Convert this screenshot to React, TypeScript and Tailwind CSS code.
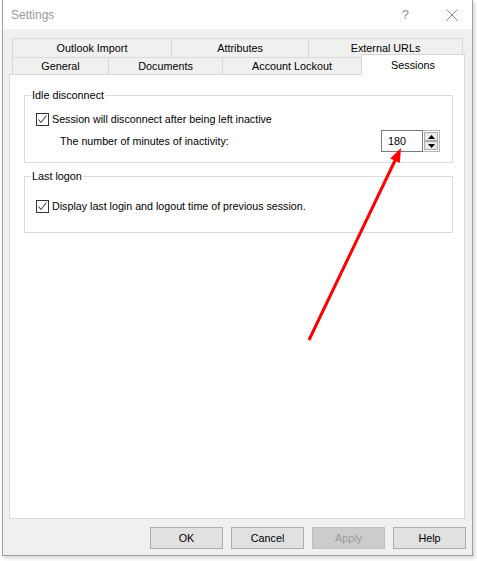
import React from "react";

const font = { fontFamily: '"Liberation Sans", Arial, sans-serif' };

function CheckBox() {
  return (
    <div className="w-[13px] h-[13px] border border-[#333333] bg-white flex items-center justify-center shrink-0">
      <svg width="11" height="11" viewBox="0 0 11 11">
        <path d="M1.5 5.5 L4 8.5 L9.5 1.5" fill="none" stroke="#444444" strokeWidth="1.1" />
      </svg>
    </div>
  );
}

function Tab({ label, w, last }: { label: string; w: string; last?: boolean }) {
  return (
    <div
      className={`${w} h-full border-t border-l border-[#d9d9d9] bg-[#f0f0f0] flex items-center justify-center text-[10.8px] text-black ${last ? "border-r" : ""}`}
    >
      {label}
    </div>
  );
}

export default function App() {
  return (
    <div className="relative w-[477px] h-[561px] bg-white overflow-hidden" style={font}>
      <div className="ml-[2px] w-[471px] h-[556px] border-l border-r border-b border-[#a0a0a0] bg-[#f0f0f0] flex flex-col shadow-[2px_2px_4px_rgba(0,0,0,0.18)]">
        {/* title bar */}
        <div className="h-[29px] bg-white flex items-center pl-[8px] pr-[14px] shrink-0">
          <span className="text-[12px] text-[#9a9a9a] leading-none">Settings</span>
          <div className="flex-1" />
          <span className="text-[13px] text-[#8c8c8c] leading-none mr-[37px]">?</span>
          <svg width="12" height="12" viewBox="0 0 12 12">
            <path d="M0.5 0.5 L11.5 11.5 M11.5 0.5 L0.5 11.5" stroke="#8a8a8a" strokeWidth="1" fill="none" />
          </svg>
        </div>

        {/* tabs row 1 */}
        <div className="mt-[9px] ml-[9px] h-[19px] flex">
          <Tab label="Outlook Import" w="w-[159px]" />
          <Tab label="Attributes" w="w-[137px]" />
          <Tab label="External URLs" w="w-[155px]" last />
        </div>
        {/* tabs row 2 */}
        <div className="-mt-[3px] ml-[9px] h-[21px] flex items-end relative z-10">
          <div className="h-[17px] mb-[1px] flex">
            <Tab label="General" w="w-[96px]" />
            <Tab label="Documents" w="w-[114px]" />
            <Tab label="Account Lockout" w="w-[139px]" />
          </div>
          <div className="w-[104px] h-[21px] border-t border-l border-r border-[#d9d9d9] bg-white flex justify-center pt-[2px] text-[10.8px] text-black">
            Sessions
          </div>
        </div>

        {/* panel */}
        <div className="-mt-[1px] ml-[6px] w-[456px] h-[445px] border border-[#d9d9d9] bg-white pt-[20px] pl-[14px] shrink-0">
          {/* Idle disconnect */}
          <div className="relative w-[429px] h-[68px] border border-[#dcdcdc]">
            <span className="absolute -top-[8px] left-[6px] px-[1px] bg-white text-[10.8px] leading-[14px] text-black">
              Idle disconnect
            </span>
            <div className="absolute left-[11px] top-[15px] flex items-center gap-[3px] text-[10.7px] text-black">
              <CheckBox />
              <span>Session will disconnect after being left inactive</span>
            </div>
            <div className="absolute left-[35px] top-[34px] right-[12px] flex items-center text-[10.7px] text-black">
              <span>The number of minutes of inactivity:</span>
              <div className="flex-1" />
              <div className="flex h-[22px]">
                <div className="w-[42px] h-[22px] border border-[#7a7a7a] flex items-center pl-[6px] text-[10.8px]">
                  180
                </div>
                <div className="w-[17px] h-[22px] border-t border-r border-b border-[#b5b5b5] flex flex-col p-[1px] gap-0">
                  <div className="flex-1 border border-[#adadad] bg-[#e9e9e9] flex items-center justify-center">
                    <svg width="7" height="4" viewBox="0 0 7 4">
                      <path d="M3.5 0 L7 4 L0 4 Z" fill="#000" />
                    </svg>
                  </div>
                  <div className="flex-1 border border-[#adadad] bg-[#e9e9e9] flex items-center justify-center">
                    <svg width="7" height="4" viewBox="0 0 7 4">
                      <path d="M0 0 L7 0 L3.5 4 Z" fill="#000" />
                    </svg>
                  </div>
                </div>
              </div>
            </div>
          </div>

          {/* Last logon */}
          <div className="relative mt-[13px] w-[429px] h-[57px] border border-[#dcdcdc]">
            <span className="absolute -top-[8px] left-[6px] px-[1px] bg-white text-[10.8px] leading-[14px] text-black">
              Last logon
            </span>
            <div className="absolute left-[11px] top-[21px] flex items-center gap-[3px] text-[10.7px] text-black">
              <CheckBox />
              <span>Display last login and logout time of previous session.</span>
            </div>
          </div>
        </div>

        {/* buttons */}
        <div className="mt-[8px] flex justify-end gap-[8px] pr-[6px]">
          {["OK", "Cancel"].map((b) => (
            <div
              key={b}
              className="w-[73px] h-[22px] border border-[#adadad] bg-[#e1e1e1] flex items-center justify-center text-[10.8px] text-black"
            >
              {b}
            </div>
          ))}
          <div className="w-[73px] h-[22px] border border-[#bfbfbf] bg-[#cccccc] flex items-center justify-center text-[10.8px] text-[#9a9a9a]">
            Apply
          </div>
          <div className="w-[73px] h-[22px] border border-[#adadad] bg-[#e1e1e1] flex items-center justify-center text-[10.8px] text-black">
            Help
          </div>
        </div>
      </div>

      {/* red annotation arrow */}
      <svg className="absolute left-0 top-0 pointer-events-none" width="477" height="561" viewBox="0 0 477 561">
        <line x1="309" y1="340" x2="395.5" y2="159.5" stroke="#ff0000" strokeWidth="3" />
        <path d="M401 148 L399.8 163 L390.2 158.4 Z" fill="#ff0000" />
      </svg>
    </div>
  );
}
